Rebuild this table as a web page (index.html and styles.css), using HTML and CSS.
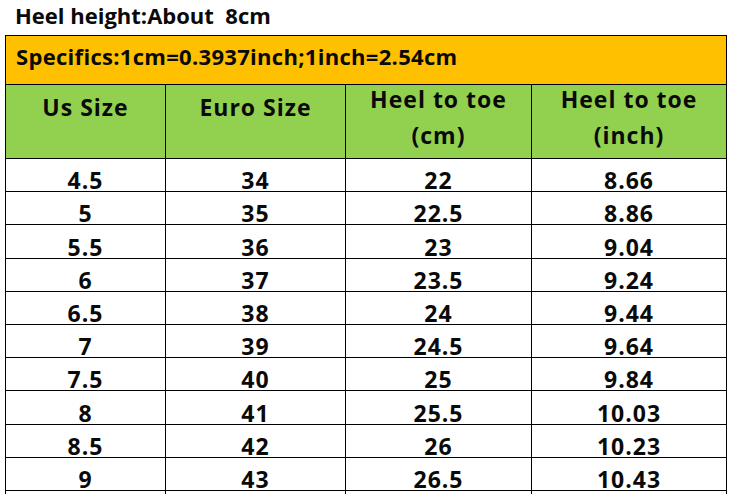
FILE: index.html
```html
<!DOCTYPE html>
<html>
<head>
<meta charset="utf-8">
<link rel="stylesheet" href="styles.css">
</head>
<body>
<div class="page">
  <h1 class="title">Heel height:About&nbsp; 8cm</h1>
  <table class="chart">
    <colgroup>
      <col class="c1"><col class="c2"><col class="c3"><col class="c4">
    </colgroup>
    <tr class="spec"><td colspan="4">Specifics:1cm=0.3937inch;1inch=2.54cm</td></tr>
    <tr class="head">
      <th class="single"><span class="l1">Us Size</span></th>
      <th class="single"><span class="l1">Euro Size</span></th>
      <th><span class="l1">Heel to toe</span><span class="l2">(cm)</span></th>
      <th><span class="l1">Heel to toe</span><span class="l2">(inch)</span></th>
    </tr>
    <tr class="row"><td>4.5</td><td>34</td><td>22</td><td>8.66</td></tr>
    <tr class="row"><td>5</td><td>35</td><td>22.5</td><td>8.86</td></tr>
    <tr class="row"><td>5.5</td><td>36</td><td>23</td><td>9.04</td></tr>
    <tr class="row"><td>6</td><td>37</td><td>23.5</td><td>9.24</td></tr>
    <tr class="row"><td>6.5</td><td>38</td><td>24</td><td>9.44</td></tr>
    <tr class="row"><td>7</td><td>39</td><td>24.5</td><td>9.64</td></tr>
    <tr class="row"><td>7.5</td><td>40</td><td>25</td><td>9.84</td></tr>
    <tr class="row"><td>8</td><td>41</td><td>25.5</td><td>10.03</td></tr>
    <tr class="row"><td>8.5</td><td>42</td><td>26</td><td>10.23</td></tr>
    <tr class="row"><td>9</td><td>43</td><td>26.5</td><td>10.43</td></tr>
    <tr class="cut"><td></td><td></td><td></td><td></td></tr>
  </table>
</div>
</body>
</html>
```
FILE: styles.css
```css
html, body {
  margin: 0;
  padding: 0;
  background: #ffffff;
  overflow: hidden;
}
.page {
  width: 729px;
  height: 494px;
  overflow: hidden;
  font-family: "Open Sans", "Noto Sans CJK KR", sans-serif;
  font-weight: 700;
  color: #0a0a0a;
}
.title {
  margin: 0;
  padding: 0 0 0 15px;
  height: 35px;
  box-sizing: border-box;
  font-size: 22px;
  font-weight: 700;
  line-height: 31px;
}
.chart {
  margin-left: 5px;
  width: 721px;
  border-collapse: collapse;
  table-layout: fixed;
}
.c1 { width: 160px; }
.c2 { width: 180px; }
.c3 { width: 186px; }
.c4 { width: 195px; }
.chart td, .chart th {
  border: 1px solid #000;
  padding: 0;
  text-align: center;
  font-size: 23px;
  font-weight: 700;
  letter-spacing: 1px;
}
.spec td {
  background: #ffc000;
  text-align: left;
  padding-left: 10px;
  height: 48px;
  line-height: 41px;
  vertical-align: top;
  font-size: 22px;
  letter-spacing: 0.3px;
}
.head th {
  background: #92d050;
  height: 74px;
  box-sizing: border-box;
  vertical-align: top;
  padding-top: 0;
}
.head th.single {
  padding-top: 8px;
}
.l1 {
  display: block;
  line-height: 28px;
}
.l2 {
  display: block;
  line-height: 44px;
}
.row td {
  height: 32.2px;
  line-height: 22px;
  vertical-align: bottom;
}
.cut td { height: 20px; }
```
